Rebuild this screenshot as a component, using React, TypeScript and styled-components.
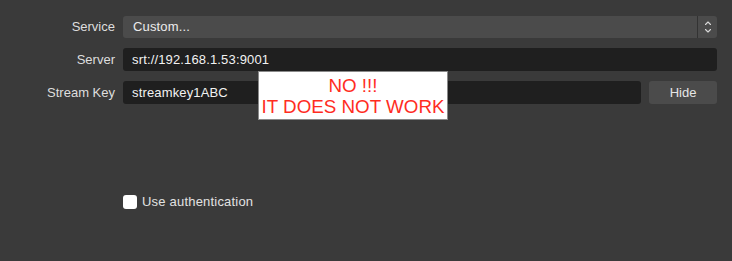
import React from "react";
import styled, { createGlobalStyle } from "styled-components";

const Global = createGlobalStyle`
  html, body { margin: 0; padding: 0; background: #3a3a3a; }
  body { font-family: "Liberation Sans", Arial, sans-serif; }
`;

const Page = styled.div`
  position: relative;
  width: 732px;
  height: 261px;
  box-sizing: border-box;
  padding: 16px 15px 0 0;
  background: #3a3a3a;
  display: flex;
  flex-direction: column;
`;

const Form = styled.div`
  display: grid;
  grid-template-columns: 115px 1fr;
  column-gap: 8px;
  row-gap: 10px;
  align-items: center;
`;

const Label = styled.div`
  text-align: right;
  font-size: 13px;
  color: #dedede;
  line-height: 22px;
`;

const Combo = styled.div`
  display: flex;
  height: 22px;
  background: #4b4b4b;
  border-radius: 3px;
  overflow: hidden;
`;

const ComboText = styled.div`
  flex: 1;
  padding-left: 10px;
  font-size: 13px;
  letter-spacing: 0.15px;
  color: #ececec;
  line-height: 22px;
`;

const ComboArrows = styled.div`
  width: 19px;
  border-left: 1px solid #333;
  display: flex;
  align-items: center;
  justify-content: center;
`;

const Input = styled.div`
  flex: 1;
  height: 23px;
  background: #1f1f1f;
  border-radius: 3px;
  padding-left: 9px;
  font-size: 13px;
  letter-spacing: 0.15px;
  color: #f2f2f2;
  line-height: 23px;
`;

const KeyRow = styled.div`
  display: flex;
  gap: 8px;
`;

const Button = styled.div`
  width: 68px;
  height: 23px;
  background: #4b4b4b;
  border-radius: 3px;
  font-size: 13px;
  color: #e6e6e6;
  text-align: center;
  line-height: 23px;
`;

const CheckRow = styled.label`
  display: flex;
  align-items: center;
  gap: 5px;
  margin-top: 90px;
  margin-left: 123px;
  font-size: 13px;
  letter-spacing: 0.2px;
  color: #e2e2e2;
`;

const Box = styled.span`
  width: 14px;
  height: 14px;
  border-radius: 3px;
  background: #fff;
  display: inline-block;
`;

const Overlay = styled.div`
  position: absolute;
  left: 258px;
  top: 71px;
  width: 188px;
  height: 46px;
  background: #fff;
  border: 1px solid #8a8a8a;
  color: #ff2d1f;
  font-size: 18.8px;
  line-height: 21.5px;
  text-align: center;
  display: flex;
  flex-direction: column;
  justify-content: center;
  padding-top: 1px;
`;

export default function App() {
  return (
    <>
      <Global />
      <Page>
        <Form>
          <Label>Service</Label>
          <Combo>
            <ComboText>Custom...</ComboText>
            <ComboArrows>
              <svg width="10" height="16" viewBox="0 0 10 16" fill="none" stroke="#d8d8d8" strokeWidth="1.1" strokeLinecap="round" strokeLinejoin="round">
                <path d="M2.5 5.5 L5 3 L7.5 5.5" />
                <path d="M2.5 10.5 L5 13 L7.5 10.5" />
              </svg>
            </ComboArrows>
          </Combo>
          <Label>Server</Label>
          <Input>srt://192.168.1.53:9001</Input>
          <Label>Stream Key</Label>
          <KeyRow>
            <Input>streamkey1ABC</Input>
            <Button>Hide</Button>
          </KeyRow>
        </Form>
        <CheckRow>
          <Box />
          Use authentication
        </CheckRow>
        <Overlay>
          <div>NO !!!</div>
          <div>IT DOES NOT WORK</div>
        </Overlay>
      </Page>
    </>
  );
}
